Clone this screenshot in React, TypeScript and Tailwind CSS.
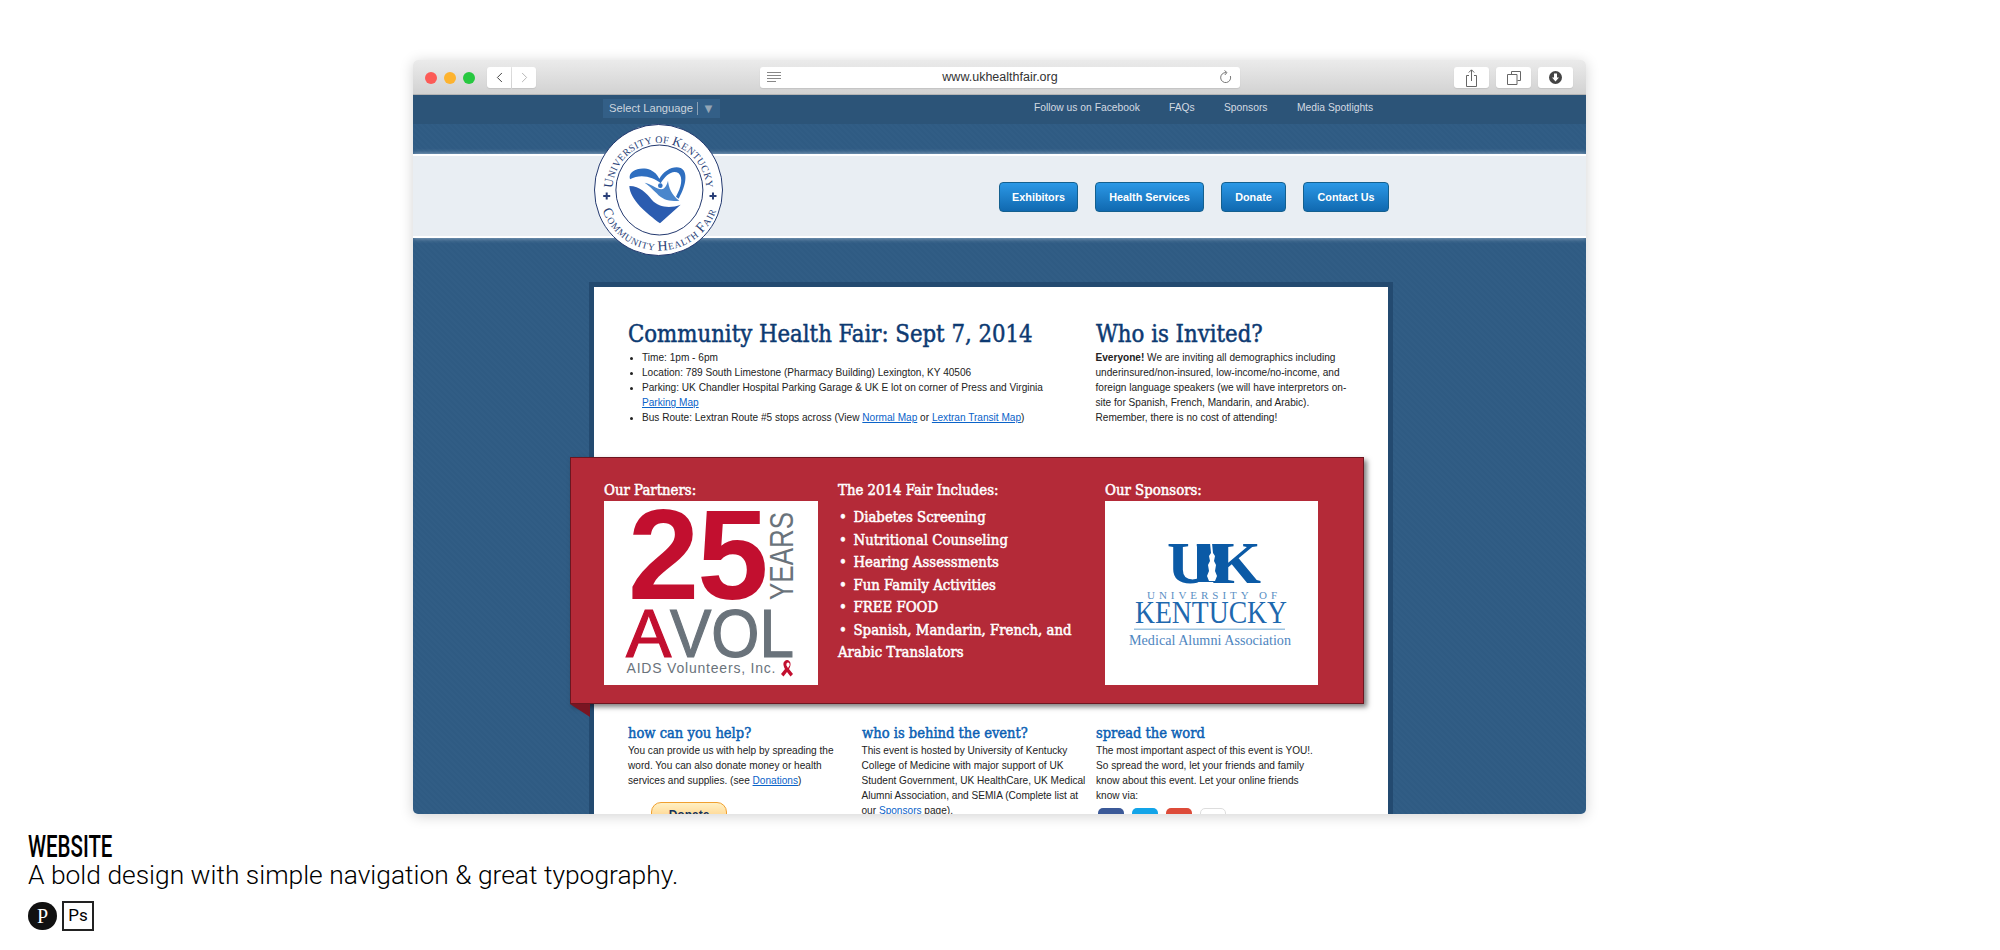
import * as React from "react"
import { ChevronLeft, ChevronRight } from "lucide-react"

const slab = "font-['DejaVu_Serif_Condensed','DejaVu_Serif',serif] [-webkit-text-stroke:0.5px]"
const pageTexture =
  "bg-[repeating-linear-gradient(45deg,#315d85_0px,#315d85_2px,#2f5b83_2px,#2f5b83_4px)]"

function TrafficLights() {
  return (
    <div className="flex gap-[7px]">
      <span className="h-3 w-3 rounded-full bg-[#fc5b57]" />
      <span className="h-3 w-3 rounded-full bg-[#fdb32f]" />
      <span className="h-3 w-3 rounded-full bg-[#27c840]" />
    </div>
  )
}

function ToolButton({ children }: { children: React.ReactNode }) {
  return (
    <div className="flex h-[21px] w-[35px] items-center justify-center rounded-[3px] bg-white shadow-[0_1px_1px_#c4c4c4]">
      {children}
    </div>
  )
}

function Toolbar() {
  return (
    <div className="flex h-[35px] items-center bg-gradient-to-b from-[#ebebeb] to-[#d2d2d2] border-b border-[#b4b4b4] pl-[12px] pr-[13px] pt-[1px]">
      <TrafficLights />
      <div className="ml-[12px] flex gap-px">
        <div className="flex h-[21px] w-[24px] items-center justify-center rounded-l-[3px] bg-white shadow-[0_1px_1px_#c4c4c4]">
          <ChevronLeft size={17} strokeWidth={1.4} className="text-[#444]" />
        </div>
        <div className="flex h-[21px] w-[24px] items-center justify-center rounded-r-[3px] bg-white shadow-[0_1px_1px_#c4c4c4]">
          <ChevronRight size={17} strokeWidth={1.2} className="text-[#aaa]" />
        </div>
      </div>
      <div className="relative ml-[224px] flex h-[21px] w-[480px] items-center justify-center rounded-[3px] bg-white font-['Liberation_Sans',sans-serif] text-[12.5px] text-[#333] shadow-[0_1px_1px_#c4c4c4]">
        <svg className="absolute left-[7px] top-[5px]" width="14" height="11" viewBox="0 0 14 11" stroke="#888" strokeWidth="1">
          <path d="M0 .5h14M0 3.5h14M0 6.5h14M0 9.5h9" />
        </svg>
        www.ukhealthfair.org
        <svg className="absolute right-[7px] top-[3px]" width="15" height="15" viewBox="0 0 15 15" fill="none" stroke="#777" strokeWidth="1">
          <path d="M8 2.6A5 5 0 1 0 12.4 6" />
          <path d="M6.5 .5 9 2.6 6.8 5" />
        </svg>
      </div>
      <div className="ml-auto flex gap-[7px]">
        <ToolButton>
          <svg width="13" height="18" viewBox="0 0 13 18" fill="none" stroke="#666" strokeWidth="1">
            <path d="M4 6.5H1.5v11h10v-11H9M6.5 12V1M3.8 3.5 6.5.8l2.7 2.7" />
          </svg>
        </ToolButton>
        <ToolButton>
          <svg width="14" height="14" viewBox="0 0 14 14" fill="none" stroke="#666" strokeWidth="1">
            <path d="M4.5 3V.5h9v9H10.5" />
            <path d="M.5 3.5h9.500v10h-9.500z" />
          </svg>
        </ToolButton>
        <ToolButton>
          <svg width="13" height="13" viewBox="0 0 13 13">
            <circle cx="6.500" cy="6.500" r="6.500" fill="#444" />
            <path d="M5 2.500h3v4h2l-3.500 4-3.500-4h2z" fill="#fff" />
          </svg>
        </ToolButton>
      </div>
    </div>
  )
}

const topLinks = [
  { label: "Follow us on Facebook", className: "w-[135px]" },
  { label: "FAQs", className: "w-[55px]" },
  { label: "Sponsors", className: "w-[73px]" },
  { label: "Media Spotlights", className: "" },
]

function TopBar() {
  return (
    <div className="flex h-[29px] bg-[#2c5478] font-['Liberation_Sans',sans-serif] text-[#d3dae2]">
      <div className="ml-[190px] mt-[4px] flex h-[19px] w-[117px] items-center bg-[#335f87] pl-[6px] text-[11.200px] text-[#ccd5de]">
        Select Language
        <span className="mx-[4px] h-[13px] w-px bg-[#8aa0b5]" />
        <span className="text-[13px] text-[#93a5b5]">▼</span>
      </div>
      <div className="ml-[314px] flex pt-[5px] text-[10.300px]">
        {topLinks.map((link) => (
          <span key={link.label} className={link.className}>
            {link.label}
          </span>
        ))}
      </div>
    </div>
  )
}

const navButtons = [
  { label: "Exhibitors", className: "w-[79px]" },
  { label: "Health Services", className: "w-[109px]" },
  { label: "Donate", className: "w-[65px]" },
  { label: "Contact Us", className: "w-[86px]" },
]

function Seal() {
  return (
    <svg className="absolute left-[181px] top-[29px]" width="129" height="132" viewBox="0 0 129 132">
      <defs>
        <path id="sealTop" d="M21.200 82A47 47 0 1 1 109.600 82" />
        <path id="sealBottom" d="M13 35.750A60.500 60.500 0 1 0 117.800 35.750" />
      </defs>
      <ellipse cx="64.500" cy="66" rx="64" ry="65.500" fill="#fff" stroke="#23396f" strokeWidth="1" />
      <ellipse cx="65.400" cy="66" rx="43.500" ry="45" fill="#fff" stroke="#23396f" strokeWidth="1" />
      <text fill="#2a3f78" fontFamily="'Liberation Serif', serif" fontSize="10" letterSpacing="0.3" textAnchor="middle">
        <textPath href="#sealTop" startOffset="50%">
          <tspan fontSize="13">U</tspan>NIVERSITY OF <tspan fontSize="13">K</tspan>ENTUCKY
        </textPath>
      </text>
      <text fill="#2a3f78" fontFamily="'Liberation Serif', serif" fontSize="9.500" letterSpacing="0.8" textAnchor="middle">
        <textPath href="#sealBottom" startOffset="50%">
          <tspan fontSize="14">C</tspan>OMMUNITY <tspan fontSize="14">H</tspan>EALTH <tspan fontSize="14">F</tspan>AIR
        </textPath>
      </text>
      <path d="M9.200 72h7M12.700 68.500v7M115.500 72h7M119 68.500v7" stroke="#2a3f78" strokeWidth="2" />
      <g transform="translate(26 26) scale(.3333)">
        <path d="M30 88C22 62 62 48 92 60 104 66 112 74 118 86 132 62 160 46 182 54 204 64 200 104 176 146L168 140C184 112 190 84 176 70 158 58 136 76 122 100 100 80 60 70 30 88Z" fill="#2f6fc0" />
        <path d="M74 98C90 100 108 116 124 118 136 116 140 106 144 92 146 112 154 134 178 152 150 156 128 150 110 130 98 118 86 106 74 98Z" fill="#4a86cc" />
        <circle cx="121" cy="107" r="7" fill="#3273c4" />
        <path d="M28 108C60 108 80 130 96 150 116 172 150 176 182 164L120 220C80 190 30 150 28 108Z" fill="#2b5cb0" />
      </g>
    </svg>
  )
}

function Header() {
  return (
    <div className="relative">
      <TopBar />
      <div className="h-[30px]" />
      <div className="flex h-[84px] items-center border-y-2 border-white bg-[#e9eef3] pl-[586px] pt-[2px] shadow-[0_0_5px_#a9bdd2]">
        <div className="flex gap-[17px]">
          {navButtons.map((btn) => (
            <div
              key={btn.label}
              className={`flex h-[30px] items-center justify-center rounded-[4px] border border-[#14608f] bg-gradient-to-b from-[#2b98e6] to-[#1069b0] font-['Liberation_Sans',sans-serif] text-[10.800px] font-bold text-white ${btn.className}`}
            >
              {btn.label}
            </div>
          ))}
        </div>
      </div>
      <Seal />
    </div>
  )
}

function InfoList() {
  return (
    <ul className="list-disc pl-[14px] [&>li]:marker:text-[9px]">
      <li>Time: 1pm - 6pm</li>
      <li>Location: 789 South Limestone (Pharmacy Building) Lexington, KY 40506</li>
      <li>
        Parking: UK Chandler Hospital Parking Garage &amp; UK E lot on corner of Press and Virginia
        <br />
        <a className="text-[#0a63c9] underline">Parking Map</a>
      </li>
      <li>
        Bus Route: Lextran Route #5 stops across (View <a className="text-[#0a63c9] underline">Normal Map</a> or{" "}
        <a className="text-[#0a63c9] underline">Lextran Transit Map</a>)
      </li>
    </ul>
  )
}

function Intro() {
  return (
    <div className="grid h-[170px] grid-cols-[467.500px_1fr] pl-[34px] pt-[31px]">
      <div>
        <h1 className={`${slab} origin-left scale-x-[0.946] whitespace-nowrap text-[25px] leading-[32px] text-[#0d3a72]`}>
          Community Health Fair: Sept 7, 2014
        </h1>
        <InfoList />
      </div>
      <div className="w-[262px]">
        <h1 className={`${slab} origin-left scale-x-[0.946] whitespace-nowrap text-[25px] leading-[32px] text-[#0d3a72]`}>
          Who is Invited?
        </h1>
        <p>
          <b>Everyone!</b> We are inviting all demographics including underinsured/non-insured, low-income/no-income, and
          foreign language speakers (we will have interpretors on-site for Spanish, French, Mandarin, and Arabic).
          Remember, there is no cost of attending!
        </p>
      </div>
    </div>
  )
}

function AvolLogo() {
  return (
    <svg className="block" width="214" height="184" viewBox="0 0 214 184">
      <rect width="214" height="184" fill="#fff" />
      <g fontFamily="'Liberation Sans', sans-serif" className="[-webkit-text-stroke:0px]">
        <text x="24" y="98" fontSize="128" fontWeight="700" letterSpacing="-2" fill="#c20f2f">25</text>
        <text x="189" y="99" fontSize="33" fill="#6a737b" transform="rotate(-90 189 99)" textLength="88" lengthAdjust="spacingAndGlyphs">YEARS</text>
        <text x="22" y="156" fontSize="68" fill="#c20f2f" stroke="#c20f2f" strokeWidth="1.200">A</text>
        <text x="66" y="156" fontSize="68" fill="#6a737b" stroke="#6a737b" strokeWidth="1.200" textLength="124" lengthAdjust="spacingAndGlyphs">VOL</text>
        <text x="22.500" y="172" fontSize="14" fill="#6a737b" textLength="149">AIDS Volunteers, Inc.</text>
      </g>
      <path d="M184 159c-3 0-5 2-4.500 5 .2 1.500 1 3 1.500 4l-4 5 2.500 2.500 3.500-4.500 3.500 4.500 2.500-2.500-4-5c.5-1 1.300-2.500 1.500-4 .5-3-1.500-5-4-5z" fill="#c20f2f" />
      <path d="M184 161.500c-1 0-2 1-1.500 3l1.500 2.500 1.500-2.500c.5-2-.5-3-1.500-3z" fill="#fff" />
    </svg>
  )
}

function UkLogo() {
  return (
    <svg className="block" width="213" height="184" viewBox="0 0 213 184">
      <rect width="213" height="184" fill="#fff" />
      <g fontFamily="'Liberation Serif', serif" fill="#0b5aa6" className="[-webkit-text-stroke:0px]">
        <text x="62" y="82" fontSize="60" fontWeight="700" textLength="94" lengthAdjust="spacingAndGlyphs">UK</text>
        <rect x="92" y="43" width="26" height="38" />
        <path d="M105 42h2l1 10 2 3-1 5 2 4-1 6 2 5-2 5h-6l-2-5 2-5-1-6 2-4-1-5 2-3z" fill="#fff" />
        <text x="42" y="98" fontSize="11" fill="#5a8fc4" textLength="130">UNIVERSITY OF</text>
        <text x="30" y="122" fontSize="32" textLength="152" lengthAdjust="spacingAndGlyphs" fill="#1e68ae">KENTUCKY</text>
        <text x="24" y="144" fontSize="15" fill="#4f86bf" textLength="162" lengthAdjust="spacingAndGlyphs">Medical Alumni Association</text>
      </g>
      <rect x="29" y="127.500" width="151" height="1.500" fill="#9cc3e0" />
    </svg>
  )
}

const fairItems = [
  "Diabetes Screening",
  "Nutritional Counseling",
  "Hearing Assessments",
  "Fun Family Activities",
  "FREE FOOD",
  "Spanish, Mandarin, French, and Arabic Translators",
]

function Banner() {
  return (
    <div className="relative z-10 ml-[-24px] h-[247px] w-[794px] border border-[#6d1620] bg-[#b42a38] pl-[33px] pt-[21px] text-white shadow-[3px_3px_5px_rgba(0,0,0,0.5)]">
      <div className={`${slab} grid grid-cols-[234px_267px_1fr] text-[14.800px] leading-[21px]`}>
        <div>
          <h3 className="mb-[1px]">Our Partners:</h3>
          <AvolLogo />
        </div>
        <div>
          <h3 className="mb-[6px]">The 2014 Fair Includes:</h3>
          <ul className="w-[250px] leading-[22.500px]">
            {fairItems.map((item) => (
              <li key={item}>
                <span className="inline-block w-[15.500px] pl-[1px]">•</span>
                {item}
              </li>
            ))}
          </ul>
        </div>
        <div>
          <h3 className="mb-[1px]">Our Sponsors:</h3>
          <UkLogo />
        </div>
      </div>
      <div className="absolute left-[-1px] top-[246px] h-0 w-0 border-l-[20px] border-t-[13px] border-l-transparent border-t-[#7a1522]" />
    </div>
  )
}

function ColumnHeading({ children }: { children: React.ReactNode }) {
  return (
    <h2 className={`${slab} origin-left scale-x-[0.94] whitespace-nowrap text-[15.500px] leading-[20px] text-[#0a5fb4]`}>
      {children}
    </h2>
  )
}

const socials = [
  { label: "f", className: "bg-[#3b5998] text-white" },
  { label: "t", className: "bg-[#12a4e8] text-white" },
  { label: "g+", className: "bg-[#dd4b39] text-white" },
  { label: "", className: "bg-white border border-[#ddd]" },
]

function BottomColumns() {
  return (
    <div className="grid grid-cols-[233.500px_234.500px_1fr] pl-[34px] pt-[19px]">
      <div className="w-[220px]">
        <ColumnHeading>how can you help?</ColumnHeading>
        <p>
          You can provide us with help by spreading the word. You can also donate money or health services and supplies.
          (see <a className="text-[#0a63c9] underline">Donations</a>)
        </p>
        <div className="ml-[23px] mt-[14px] flex h-[32px] w-[76px] justify-center rounded-[10px] border border-[#f0a030] bg-gradient-to-b from-[#fff0c4] to-[#ffb84a] pt-[5px] text-[12px] font-bold text-[#14325c]">
          Donate
        </div>
      </div>
      <div className="w-[228px]">
        <ColumnHeading>who is behind the event?</ColumnHeading>
        <p>
          This event is hosted by University of Kentucky College of Medicine with major support of UK Student Government,
          UK HealthCare, UK Medical Alumni Association, and SEMIA (Complete list at our{" "}
          <a className="text-[#0a63c9] underline">Sponsors</a> page).
        </p>
      </div>
      <div className="w-[226px]">
        <ColumnHeading>spread the word</ColumnHeading>
        <p>
          The most important aspect of this event is YOU!. So spread the word, let your friends and family know about
          this event. Let your online friends know via:
        </p>
        <div className="ml-[2px] mt-[5px] flex gap-[8px]">
          {socials.map((s, i) => (
            <div key={i} className={`flex h-[28px] w-[26px] items-center justify-center rounded-[5px] text-[14px] font-bold ${s.className}`}>
              {s.label}
            </div>
          ))}
        </div>
      </div>
    </div>
  )
}

function Card() {
  return (
    <div className="ml-[176px] mt-[44px] h-[560px] w-[804px] border-[5px] border-[#234a70] bg-white font-['Liberation_Sans',sans-serif] text-[10.100px] leading-[15px] text-[#222]">
      <Intro />
      <Banner />
      <BottomColumns />
    </div>
  )
}

function Caption() {
  return (
    <div className="pl-[28px] pt-[18px] text-black">
      <div className="h-[28px] origin-left scale-x-[0.66] font-['Roboto',sans-serif] text-[31px] font-medium leading-[30px]">WEBSITE</div>
      <div className="font-['Roboto',sans-serif] text-[26.400px] font-light leading-[30px]">
        A bold design with simple navigation &amp; great typography.
      </div>
      <div className="mt-[11px] flex items-center gap-[5px]">
        <span className="flex h-[28px] w-[29px] items-center justify-center rounded-full bg-[#111] font-['Liberation_Serif',serif] text-[20px] text-white">P</span>
        <span className="flex h-[30px] w-[32px] items-center justify-center border-[2.500px] border-[#222] font-['Roboto',sans-serif] text-[17px]">Ps</span>
      </div>
    </div>
  )
}

export default function App() {
  return (
    <div className="h-[950px] w-[2000px] overflow-hidden bg-white pt-[60px]">
      <div className="ml-[413px] flex h-[754px] w-[1173px] flex-col overflow-hidden rounded-[5px] shadow-[0_2px_14px_rgba(0,0,0,0.18)]">
        <Toolbar />
        <div className={`flex-1 overflow-hidden ${pageTexture}`}>
          <Header />
          <Card />
        </div>
      </div>
      <Caption />
    </div>
  )
}
